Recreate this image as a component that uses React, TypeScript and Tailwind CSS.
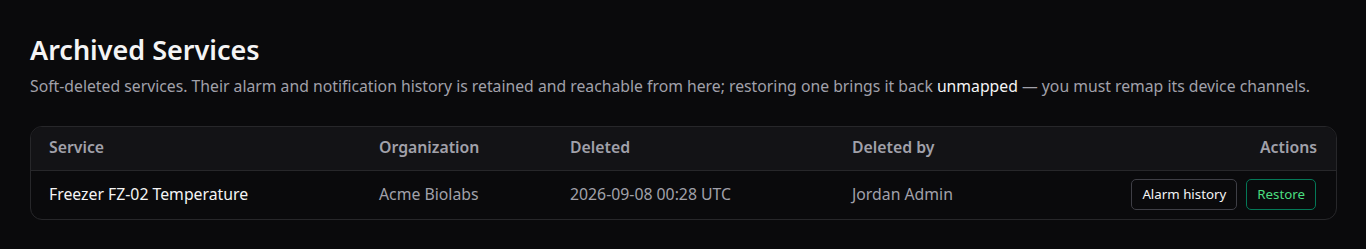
import React from 'react';

const rows = [
  {
    id: 'fz-02',
    name: 'Freezer FZ-02 Temperature',
    org: 'Acme Biolabs',
    deleted: '2026-09-08 00:28 UTC',
    by: 'Jordan Admin',
  },
];

export default function App() {
  return (
    <div className="min-h-screen bg-[#0a0a0c] px-[30px] pt-[34px] pb-8 font-['Noto_Sans',sans-serif]">
      <h1 className="text-[27px] leading-[32px] font-semibold text-[#f4f4f5]">Archived Services</h1>
      <p className="mt-[9px] text-[15.75px] leading-[22px] text-[#a1a1aa]">
        Soft-deleted services. Their alarm and notification history is retained and reachable from here; restoring one
        brings it back <span className="text-[#f4f4f5]">unmapped</span> — you must remap its device channels.
      </p>

      {/* archived list */}
      <div className="mt-[29px] mr-[-1px] rounded-xl border border-[#27272a] overflow-hidden">
        <table className="w-full border-collapse text-left text-[15.8px] table-fixed">
          <thead>
            <tr className="bg-[#131316] border-b border-[#27272a] text-[#a1a1aa]">
              <th className="w-[348px] pl-[18px] h-[43px] font-semibold">Service</th>
              <th className="w-[191px] font-semibold">Organization</th>
              <th className="w-[282px] font-semibold">Deleted</th>
              <th className="font-semibold">Deleted by</th>
              <th className="pr-[19px] text-right font-semibold">Actions</th>
            </tr>
          </thead>
          <tbody>
            {rows.map((r) => (
              <tr key={r.id} className="h-[49px]">
                <td className="pl-[18px] text-[#f4f4f5]">{r.name}</td>
                <td className="text-[#a1a1aa]">{r.org}</td>
                <td className="text-[#a1a1aa]">{r.deleted}</td>
                <td className="text-[#a1a1aa]">{r.by}</td>
                <td className="pr-[20px]">
                  <div className="flex justify-end gap-[9px]">
                    <button className="h-[31px] px-[10px] rounded-[5px] border border-[#3f3f46] text-[13.3px] text-[#f4f4f5]">
                      Alarm history
                    </button>
                    <button className="h-[31px] px-[10px] rounded-[5px] border border-[#047857] text-[13.3px] text-[#4ade80]">
                      Restore
                    </button>
                  </div>
                </td>
              </tr>
            ))}
          </tbody>
        </table>
      </div>
    </div>
  );
}
